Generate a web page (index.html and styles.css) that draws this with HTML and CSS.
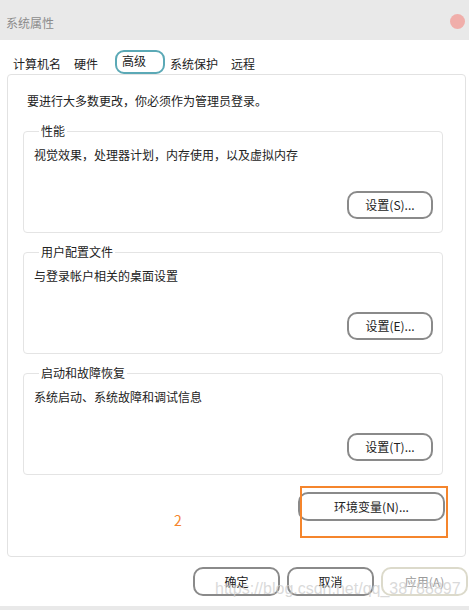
FILE: index.html
```html
<!DOCTYPE html>
<html lang="zh">
<head>
<meta charset="utf-8">
<title>系统属性</title>
<link rel="stylesheet" href="styles.css">
</head>
<body>
<div class="window">
  <header class="titlebar">
    <span class="title">系统属性</span>
    <span class="close-dot"></span>
  </header>
  <nav class="tabs">
    <span class="tab">计算机名</span>
    <span class="tab">硬件</span>
    <span class="tab active">高级</span>
    <span class="tab">系统保护</span>
    <span class="tab">远程</span>
  </nav>
  <main class="panel">
    <p class="note">要进行大多数更改，你必须作为管理员登录。</p>
    <fieldset class="group">
      <legend>性能</legend>
      <p class="desc">视觉效果，处理器计划，内存使用，以及虚拟内存</p>
      <div class="btn-row"><button class="btn">设置(S)...</button></div>
    </fieldset>
    <fieldset class="group">
      <legend>用户配置文件</legend>
      <p class="desc">与登录帐户相关的桌面设置</p>
      <div class="btn-row"><button class="btn">设置(E)...</button></div>
    </fieldset>
    <fieldset class="group">
      <legend>启动和故障恢复</legend>
      <p class="desc">系统启动、系统故障和调试信息</p>
      <div class="btn-row"><button class="btn">设置(T)...</button></div>
    </fieldset>
    <div class="env-row">
      <span class="mark-num">2</span>
      <button class="btn env">环境变量(N)...</button>
      <span class="mark-box"></span>
    </div>
  </main>
  <footer class="actions">
    <button class="btn act">确定</button>
    <button class="btn act">取消</button>
    <button class="btn act disabled">应用(A)</button>
    <span class="watermark">https://blog.csdn.net/qq_38788897</span>
  </footer>
  <div class="bottom-strip"></div>
</div>
</body>
</html>
```

FILE: styles.css
```css
* { box-sizing: border-box; }
html, body { margin: 0; padding: 0; background: #fff; }
body {
  width: 469px;
  height: 610px;
  overflow: hidden;
  font-family: "Noto Sans CJK SC", "Noto Sans", sans-serif;
  font-size: 12px;
  color: #222;
}
.window { display: flex; flex-direction: column; height: 610px; }

.titlebar {
  height: 40px;
  background: #e9e9e9;
  display: flex;
  align-items: flex-start;
  justify-content: space-between;
  padding: 15px 4px 0 6px;
}
.title { color: #8c8c8c; font-size: 12px; line-height: 16px; }
.close-dot {
  width: 15px; height: 15px; border-radius: 50%;
  background: #f0aeaa;
  margin-top: -1px;
}

.tabs {
  display: flex;
  align-items: center;
  height: 34px;
  padding: 10px 0 0 13px;
}
.tab { line-height: 16px; margin-right: 13px; padding-top: 4px; }
.tab.active {
  border: 2px solid #5ba9b6;
  border-radius: 9px;
  width: 50px;
  height: 24px;
  padding: 0 0 0 5px;
  margin: 0 5px 0 4px;
  line-height: 18px;
}

.panel {
  margin: 0 3px 0 7px;
  border: 1px solid #e2e2e2;
  border-radius: 4px;
  padding: 17px 22px 35px 15px;
  height: 483px;
}
.note { margin: 0 0 13px 4px; line-height: 18px; }

.group {
  margin: 0 0 11px 0;
  border: 1px solid #e4e4e4;
  border-radius: 4px;
  padding: 7px 9px 13px 10px;
  min-width: 0;
}
.group legend {
  padding: 0 2px;
  margin-left: 5px;
  line-height: 16px;
}
.desc { margin: 0; line-height: 18px; }
.btn-row { display: flex; justify-content: flex-end; margin-top: 27px; }

.btn {
  font-family: "Noto Sans CJK SC", "Noto Sans", sans-serif;
  font-size: 12px;
  color: #222;
  background: #fff;
  border: 2px solid #8a8a8a;
  border-radius: 10px;
  height: 28px;
  width: 86px;
  padding: 0;
  line-height: 16px;
}

.env-row {
  position: relative;
  display: flex;
  justify-content: flex-end;
  margin: 17px -2px 0 0;
}
.btn.env { width: 147px; height: 29px; }
.mark-box {
  position: absolute;
  right: -3px;
  top: -6px;
  width: 148px;
  height: 52px;
  border: 2px solid #f5852c;
}
.mark-num {
  position: absolute;
  left: 151px;
  top: 20px;
  color: #f5852c;
  font-size: 14px;
  line-height: 16px;
}

.actions {
  position: relative;
  display: flex;
  justify-content: flex-end;
  gap: 7px;
  padding: 10px 1px 0 0;
  height: 49px;
}
.btn.act { width: 87px; height: 29px; }
.btn.disabled { border-color: #dcdacb; color: #9a9a9a; }
.watermark {
  position: absolute;
  left: 215px;
  top: 23px;
  font-family: "Liberation Sans", Arial, sans-serif;
  font-size: 16px;
  line-height: 18px;
  color: rgba(205, 205, 205, 0.75);
  pointer-events: none;
}

.bottom-strip { flex: 1; background: #e9e9e9; }
```
